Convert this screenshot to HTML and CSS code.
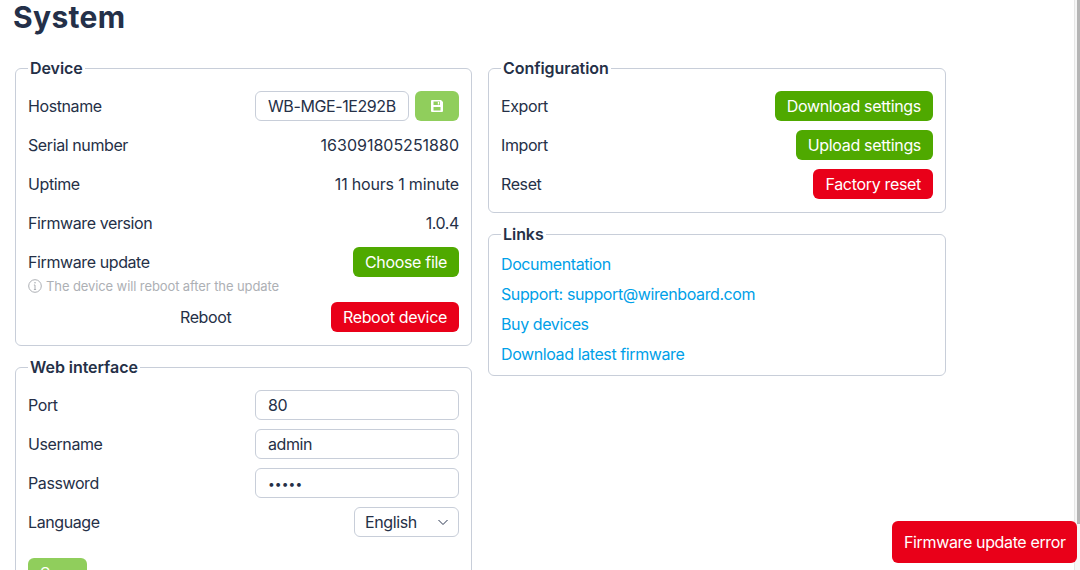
FILE: index.html
```html
<!DOCTYPE html>
<html lang="en">
<head>
<meta charset="utf-8">
<title>System</title>
<link rel="stylesheet" href="styles.css">
</head>
<body>
<main class="page">
  <h1 class="title">System</h1>
  <div class="columns">
    <div class="column">
      <fieldset class="group">
        <legend>Device</legend>
        <div class="row">
          <span>Hostname</span>
          <div class="inline">
            <input class="field field-short" type="text" value="WB-MGE-1E292B">
            <button class="btn btn-light btn-icon" type="button" aria-label="Save">
              <svg class="icon-save" viewBox="0 0 14 14"><path fill="#fff" fill-rule="evenodd" d="M2 1h9l2 2v9a1 1 0 0 1-1 1H2a1 1 0 0 1-1-1V2a1 1 0 0 1 1-1zM3.500 2.500v3.500h6.500V2.500zM3.500 8v3.500h7V8z"/><path fill="#fff" d="M7.800 3h1.400v2.500H7.800z"/></svg>
            </button>
          </div>
        </div>
        <div class="row"><span>Serial number</span><span class="digits">163091805251880</span></div>
        <div class="row"><span>Uptime</span><span class="value">11 hours 1 minute</span></div>
        <div class="row"><span>Firmware version</span><span>1.0.4</span></div>
        <div class="row"><span>Firmware update</span><button class="btn btn-green" type="button">Choose file</button></div>
        <div class="hint">
          <svg class="icon-info" viewBox="0 0 14 14"><circle cx="7" cy="7" r="6.300" fill="none" stroke="currentColor" stroke-width="1"/><path d="M7 6v4.500M5.900 10.500h2.200M5.900 6H7" fill="none" stroke="currentColor" stroke-width="1"/><circle cx="7" cy="3.800" r=".8" fill="currentColor"/></svg>
          <span>The device will reboot after the update</span>
        </div>
        <div class="row row-reboot"><span class="reboot-label">Reboot</span><button class="btn btn-red" type="button">Reboot device</button></div>
      </fieldset>
      <fieldset class="group">
        <legend>Web interface</legend>
        <div class="row"><span>Port</span><input class="field" type="text" value="80"></div>
        <div class="row"><span>Username</span><input class="field" type="text" value="admin"></div>
        <div class="row"><span>Password</span><input class="field field-password" type="password" value="admin"></div>
        <div class="row">
          <span>Language</span>
          <div class="select-wrap">
            <select class="select"><option>English</option></select>
            <svg class="chevron" viewBox="0 0 12 8"><path d="M1.500 2l4.500 4.500L10.500 2" fill="none" stroke="#2a3650" stroke-width="1"/></svg>
          </div>
        </div>
        <button class="btn btn-light btn-save" type="button">Save</button>
      </fieldset>
    </div>
    <div class="column">
      <fieldset class="group">
        <legend>Configuration</legend>
        <div class="row"><span>Export</span><button class="btn btn-green" type="button">Download settings</button></div>
        <div class="row"><span>Import</span><button class="btn btn-green" type="button">Upload settings</button></div>
        <div class="row"><span>Reset</span><button class="btn btn-red" type="button">Factory reset</button></div>
      </fieldset>
      <fieldset class="group group-links">
        <legend>Links</legend>
        <a class="link" href="#">Documentation</a>
        <a class="link" href="#">Support: support@wirenboard.com</a>
        <a class="link" href="#">Buy devices</a>
        <a class="link" href="#">Download latest firmware</a>
      </fieldset>
    </div>
  </div>
</main>
<div class="scrollbar"><div class="thumb"></div></div>
<div class="toast">Firmware update error</div>
</body>
</html>
```
FILE: styles.css
```css
* { box-sizing: border-box; }
html, body { height: 100%; }
body {
  margin: 0;
  overflow: hidden;
  background: #fff;
  color: #253047;
  font: 16px/24px Inter, "Liberation Sans", sans-serif;
  letter-spacing: -0.4px;
}
.page { padding: 0 0 0 15px; }
.title {
  margin: 0 0 0 -2px;
  height: 56px;
  font-size: 30px;
  line-height: 34px;
  font-weight: 700;
  letter-spacing: 0.35px;
  color: #243049;
}
.columns { display: flex; gap: 16px; align-items: flex-start; }
.column { width: 457px; display: flex; flex-direction: column; gap: 9px; }
.column + .column { width: 458px; }
.group {
  margin: 0;
  min-width: 0;
  padding: 11px 12px 13px;
  border: 1px solid #c8ced9;
  border-radius: 6px;
}
.group legend {
  padding: 0 2px;
  font-weight: 600;
  line-height: 24px;
  letter-spacing: -0.05px;
}
.group > .row + .row { margin-top: 9px; }
.row {
  display: flex;
  align-items: center;
  justify-content: space-between;
  height: 30px;
}
.digits { letter-spacing: 0; }
.value { letter-spacing: -0.18px; }
.inline { display: flex; gap: 6px; }
.field {
  width: 204px;
  height: 30px;
  padding: 0 12px;
  border: 1px solid #c8ced9;
  border-radius: 6px;
  background: #fff;
  color: #253047;
  font: inherit;
  letter-spacing: inherit;
  outline: none;
}
.field-short { width: 154px; }
.field-password { font-size: 12px; letter-spacing: 0.1px; }
.btn {
  height: 30px;
  padding: 0 12px;
  border: 0;
  border-radius: 6px;
  color: #fff;
  font: inherit;
  letter-spacing: -0.32px;
  white-space: nowrap;
}
.btn-green { background: #4fa900; }
.btn-red { background: #e90019; }
.btn-light { background: #90ce5c; }
.btn-icon { width: 44px; padding: 0; display: flex; align-items: center; justify-content: center; }
.icon-save { width: 14px; height: 14px; }
.hint {
  display: flex;
  align-items: center;
  gap: 4px;
  height: 16px;
  margin-top: 1px;
  color: #adb0b5;
  font-size: 13px;
  line-height: 16px;
  letter-spacing: -0.1px;
}
.icon-info { width: 14px; height: 14px; }
.row.row-reboot { margin-top: 8px; }
.reboot-label { margin-left: 152px; }
.select-wrap { position: relative; width: 105px; height: 30px; }
.select {
  appearance: none;
  width: 100%;
  height: 30px;
  padding: 0 0 0 10px;
  border: 1px solid #c8ced9;
  border-radius: 6px;
  background: #fff;
  color: #253047;
  font: inherit;
  letter-spacing: inherit;
}
.chevron { position: absolute; right: 10px; top: 11px; width: 12px; height: 8px; pointer-events: none; }
.btn-save { display: block; width: 59px; margin-top: 21px; }
.group-links { padding-top: 0; padding-bottom: 6px; }
.link {
  display: block;
  height: 30px;
  color: #00a0e8;
  line-height: 30px;
  text-decoration: none;
}
.group-links legend + .link { margin-top: 3px; }
.toast {
  position: fixed;
  left: 892px;
  top: 521px;
  width: 185px;
  height: 42px;
  padding: 0 12px;
  border-radius: 6px;
  background: #e90019;
  color: #fff;
  letter-spacing: -0.36px;
  line-height: 42px;
  white-space: nowrap;
}
.scrollbar {
  position: fixed;
  right: 0;
  top: 0;
  bottom: 0;
  width: 6px;
  background: #f6f6f6;
  border-left: 1px solid #e6e6e6;
}
.thumb { position: absolute; right: 0; top: 0; height: 524px; width: 3px; background: #b5b5b5; }
```
